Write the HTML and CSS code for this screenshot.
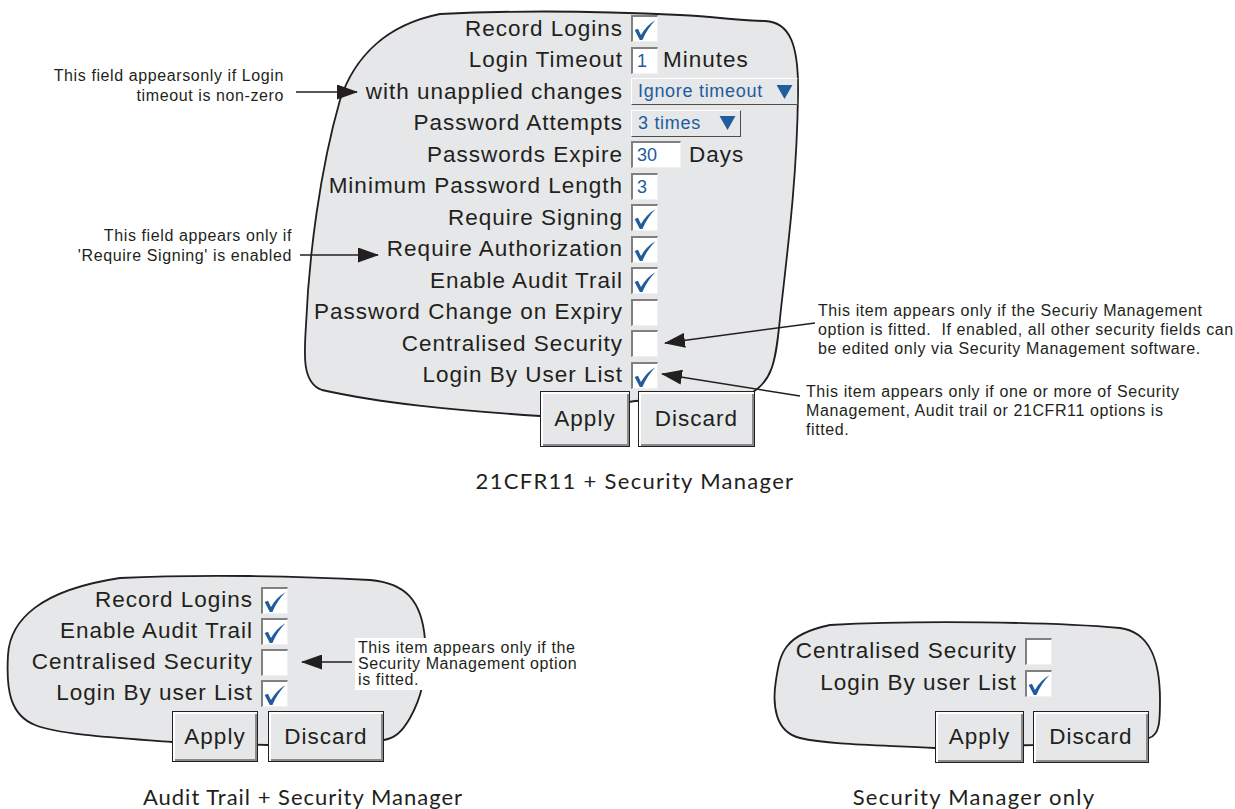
FILE: index.html
```html
<!DOCTYPE html>
<html lang="en">
<head>
  <meta charset="UTF-8" />
  <title>Security configuration</title>
  <link rel="stylesheet" href="styles.css">
</head>
<body>
  <svg class="defs" width="0" height="0">
    <defs>
      <symbol id="tick" viewBox="0 0 26 26">
        <path d="M1.8 14.2 L5.4 12.8 L8.6 19.6 C12.6 12.4 17.6 7.4 24.4 3.6 C18.8 9.2 13.8 16.2 10.2 24.8 L7.4 24.8 Z" />
      </symbol>
      <symbol id="caret" viewBox="0 0 16 14">
        <path d="M0.5 0.5 H15.5 L8 13.5 Z" />
      </symbol>
      <marker id="head" viewBox="0 0 21 15" markerWidth="21" markerHeight="15" refX="20" refY="7.5" orient="auto" markerUnits="userSpaceOnUse">
        <path d="M0 0 L21 7.5 L0 15 Z" fill="#231f20" />
      </marker>
    </defs>
  </svg>

  <div class="page">
    <!-- blobs and callout arrows behind the forms -->
    <svg class="backdrop" width="1235" height="809">
      <path class="blob" d="M440 14 C540 9 620 12 680 15 C720 17 740 21 765 21 C790 22 799 45 798 95 C797 170 790 230 782 300 C776 350 778 383 745 396 L635 401 L540 416 C450 410 380 403 322 390 C302 383 304 355 306 325 C309 255 320 170 340 100 C354 58 385 25 440 14 Z" />
      <path class="blob" d="M120 578 C200 574 300 576 370 580 C405 583 422 600 425 640 C427 680 420 700 410 718 C402 732 395 738 384 740 L268 745 L172 742 C120 738 60 735 35 725 C10 715 6 690 8 655 C10 620 40 590 120 578 Z" />
      <path class="blob" d="M830 625 C920 620 1050 622 1120 628 C1150 632 1160 660 1160 700 C1160 720 1160 735 1149 738 L1033 745 L935 748 C880 745 830 745 800 738 C775 732 772 705 776 680 C780 655 782 635 830 625 Z" />

      <line class="arrow" x1="296" y1="92" x2="357" y2="92" marker-end="url(#head)" />
      <line class="arrow" x1="300" y1="255" x2="378" y2="255" marker-end="url(#head)" />
      <line class="arrow" x1="815" y1="323" x2="665" y2="343" marker-end="url(#head)" />
      <line class="arrow" x1="800" y1="396" x2="662" y2="374" marker-end="url(#head)" />
      <line class="arrow" x1="352" y1="662" x2="302" y2="662" marker-end="url(#head)" />
    </svg>

    <p class="note note-timeout">This field appearsonly if Login<br>timeout is non-zero</p>
    <p class="note note-signing">This field appears only if<br>'Require Signing' is enabled</p>
    <p class="note note-central">This item appears only if the Securiy Management<br>option is fitted.&nbsp; If enabled, all other security fields can<br>be edited only via Security Management software.</p>
    <p class="note note-userlist">This item appears only if one or more of Security<br>Management, Audit trail or 21CFR11 options is<br>fitted.</p>
    <p class="note note-small">This item appears only if the<br>Security Management option<br>is fitted.</p>

    <section class="fig fig-main">
      <div class="form">
        <div class="row"><span class="label">Record Logins</span><span class="check"><svg><use href="#tick" /></svg></span></div>
        <div class="row"><span class="label">Login Timeout</span><span class="field">1</span><span class="unit">Minutes</span></div>
        <div class="row"><span class="label">with unapplied changes</span><span class="select select-wide">Ignore timeout<svg><use href="#caret" /></svg></span></div>
        <div class="row"><span class="label">Password Attempts</span><span class="select select-narrow">3 times<svg><use href="#caret" /></svg></span></div>
        <div class="row"><span class="label">Passwords Expire</span><span class="field field-wide">30</span><span class="unit">Days</span></div>
        <div class="row"><span class="label">Minimum Password Length</span><span class="field">3</span></div>
        <div class="row"><span class="label">Require Signing</span><span class="check"><svg><use href="#tick" /></svg></span></div>
        <div class="row"><span class="label">Require Authorization</span><span class="check"><svg><use href="#tick" /></svg></span></div>
        <div class="row"><span class="label">Enable Audit Trail</span><span class="check"><svg><use href="#tick" /></svg></span></div>
        <div class="row"><span class="label">Password Change on Expiry</span><span class="check"></span></div>
        <div class="row"><span class="label">Centralised Security</span><span class="check"></span></div>
        <div class="row"><span class="label">Login By User List</span><span class="check"><svg><use href="#tick" /></svg></span></div>
        <div class="actions">
          <span class="btn btn-apply">Apply</span>
          <span class="btn btn-discard">Discard</span>
        </div>
      </div>
      <p class="caption">21CFR11 + Security Manager</p>
    </section>

    <div class="bottom">
      <section class="fig fig-audit">
        <div class="form">
          <div class="row"><span class="label">Record Logins</span><span class="check"><svg><use href="#tick" /></svg></span></div>
          <div class="row"><span class="label">Enable Audit Trail</span><span class="check"><svg><use href="#tick" /></svg></span></div>
          <div class="row"><span class="label">Centralised Security</span><span class="check"></span></div>
          <div class="row"><span class="label">Login By user List</span><span class="check"><svg><use href="#tick" /></svg></span></div>
          <div class="actions">
            <span class="btn btn-apply">Apply</span>
            <span class="btn btn-discard">Discard</span>
          </div>
        </div>
        <p class="caption">Audit Trail + Security Manager</p>
      </section>

      <section class="fig fig-sm">
        <div class="form">
          <div class="row"><span class="label">Centralised Security</span><span class="check"></span></div>
          <div class="row"><span class="label">Login By user List</span><span class="check"><svg><use href="#tick" /></svg></span></div>
          <div class="actions">
            <span class="btn btn-apply">Apply</span>
            <span class="btn btn-discard">Discard</span>
          </div>
        </div>
        <p class="caption">Security Manager only</p>
      </section>
    </div>
  </div>
</body>
</html>
```

FILE: styles.css
```css
* {
  box-sizing: border-box;
}
body {
  margin: 0;
  background: #fff;
  color: #231f20;
  font-family: "Liberation Sans", Arial, sans-serif;
}
.defs {
  position: absolute;
}
.page {
  position: relative;
  width: 1235px;
  height: 809px;
  overflow: hidden;
  padding-top: 13px;
}
.backdrop {
  position: absolute;
  left: 0;
  top: 0;
  z-index: 0;
}
.blob {
  fill: #e6e7e8;
  stroke: #231f20;
  stroke-width: 1.8;
}
.arrow {
  stroke: #231f20;
  stroke-width: 1.6;
}

/* callout notes */
.note {
  position: absolute;
  z-index: 2;
  margin: 0;
  font-size: 16px;
  letter-spacing: 0.6px;
  line-height: 19px;
}
.note-timeout {
  right: 951px;
  top: 66px;
  line-height: 20px;
  text-align: right;
}
.note-signing {
  right: 943px;
  top: 226px;
  line-height: 20px;
  text-align: right;
}
.note-central {
  left: 818px;
  top: 301px;
}
.note-userlist {
  left: 806px;
  top: 382px;
}
.note-small {
  left: 355px;
  top: 638px;
  padding: 2px 2px 2px 3px;
  background: #fff;
  line-height: 16px;
}

/* forms */
.fig {
  position: relative;
  z-index: 1;
}
.form {
  display: flex;
  flex-direction: column;
}
.row {
  display: flex;
  align-items: center;
  gap: 8px;
  height: 31.5px;
}
.label {
  text-align: right;
  font-size: 22.5px;
  letter-spacing: 1px;
  white-space: nowrap;
}
.check,
.field {
  flex: none;
  height: 27px;
  width: 27px;
  background: #fff;
  border-style: solid;
  border-width: 2px 1px 1px 2px;
  border-color: #808080 #f0f0f0 #f0f0f0 #808080;
}
.check svg {
  display: block;
  width: 100%;
  height: 100%;
  fill: #215c9c;
}
.field {
  padding-left: 4px;
  font-size: 18px;
  line-height: 24px;
  color: #215c9c;
}
.field-wide {
  width: 50px;
}
.unit {
  font-size: 22.5px;
  letter-spacing: 1px;
}
.field + .unit {
  margin-left: -3px;
}
.field-wide + .unit {
  margin-left: 0;
}
.select {
  display: flex;
  align-items: center;
  justify-content: space-between;
  height: 27px;
  padding: 0 4px 0 6px;
  background: #e6e7e8;
  border: 1px solid;
  border-color: #fff #4d4d4d #4d4d4d #fff;
  font-size: 18px;
  letter-spacing: 0.7px;
  color: #215c9c;
}
.select svg {
  width: 17px;
  height: 16px;
  fill: #215c9c;
}
.select-wide {
  width: 167px;
}
.select-narrow {
  width: 110px;
}
.actions {
  display: flex;
  gap: 8px;
}
.btn {
  display: flex;
  align-items: center;
  justify-content: center;
  background: #e6e7e8;
  border: 1px solid #231f20;
  box-shadow: inset 2px 2px 0 #fff, inset -2px -2px 0 #8a8a8a;
  font-size: 22.5px;
  letter-spacing: 1px;
}
.caption {
  margin: 0;
  font-family: Lato, "Liberation Sans", sans-serif;
  font-size: 22px;
  letter-spacing: 1.3px;
  line-height: 24px;
  text-align: center;
}

/* 21CFR11 + Security Manager */
.fig-main .form {
  margin-left: 307px;
}
.fig-main .label {
  width: 316px;
}
.fig-main .actions {
  padding-left: 233px;
}
.fig-main .btn {
  height: 56px;
}
.fig-main .btn-apply {
  width: 90px;
}
.fig-main .btn-discard {
  width: 117px;
}
.fig-main .caption {
  width: 1270px;
  margin-top: 22px;
}

/* bottom pair */
.bottom {
  display: flex;
  align-items: flex-start;
}
.fig-audit {
  width: 620px;
  padding-top: 91.5px;
}
.fig-audit .form {
  margin-left: 20px;
}
.fig-audit .row {
  height: 31px;
}
.fig-audit .label {
  width: 233px;
}
.fig-audit .actions {
  margin-top: 2.5px;
  padding-left: 152px;
  gap: 10px;
}
.fig-audit .btn {
  height: 51px;
}
.fig-audit .btn-apply {
  width: 86px;
}
.fig-audit .btn-discard {
  width: 116px;
}
.fig-audit .caption {
  width: 606px;
  margin-top: 23px;
  letter-spacing: 1px;
}
.fig-sm {
  width: 615px;
  padding-top: 142px;
}
.fig-sm .form {
  margin-left: 160px;
}
.fig-sm .row {
  height: 32px;
}
.fig-sm .label {
  width: 237px;
}
.fig-sm .actions {
  margin-top: 12px;
  padding-left: 155px;
  gap: 9px;
}
.fig-sm .btn {
  height: 52px;
}
.fig-sm .btn-apply {
  width: 89px;
}
.fig-sm .btn-discard {
  width: 116px;
}
.fig-sm .caption {
  width: 708px;
  margin-top: 22px;
}
```
